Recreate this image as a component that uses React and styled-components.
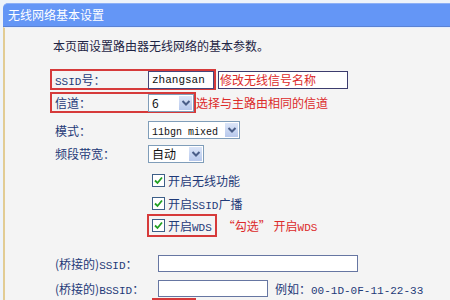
import styled, { createGlobalStyle } from "styled-components";

const GlobalStyle = createGlobalStyle`
  html, body {
    margin: 0;
    padding: 0;
    background: #eef3fa;
  }
  body {
    width: 450px;
    height: 300px;
    overflow: hidden;
    font-family: "Noto Sans CJK SC", sans-serif;
    font-size: 12px;
  }
`;

const Page = styled.div`
  width: 450px;
  height: 300px;
  padding-top: 3px;
  box-sizing: border-box;
  overflow: hidden;
`;

const Header = styled.div`
  margin-left: 3px;
  height: 24px;
  box-sizing: border-box;
  padding-left: 5px;
  background: #6496f6;
  border-top: 1px solid #8db0f6;
  border-bottom: 1px solid #5a82d4;
  border-top-left-radius: 5px;
  color: #fff;
  font-size: 12px;
  line-height: 22px;
`;

const Panel = styled.div`
  margin-left: 3px;
  height: 300px;
  border-left: 2px solid #e2cc94;
  border-top: 1px solid #e6eefc;
  background: #f4f4f4;
  padding-left: 45px;
`;

const Intro = styled.div`
  margin-top: 10px;
  padding-left: 3px;
  height: 16px;
  line-height: 16px;
  color: #1e2444;
`;

const Row = styled.div`
  display: flex;
  align-items: center;
  height: ${(p) => p.$h}px;
  margin-top: ${(p) => p.$top}px;
  padding-left: ${(p) => p.$indent || 0}px;
`;

const Field = styled.div`
  display: flex;
  align-items: center;
  height: 100%;
  box-sizing: border-box;
  border: 2px solid ${(p) => (p.$marked ? "#d63a3a" : "transparent")};
  padding-left: 3px;
  padding-right: ${(p) => p.$pr || 0}px;
  width: ${(p) => (p.$w ? `${p.$w}px` : "auto")};
`;

const Label = styled.div`
  width: ${(p) => p.$w || 93}px;
  flex-shrink: 0;
  color: #1f3a78;
  white-space: nowrap;
`;

const Latin = styled.span`
  font-family: "Liberation Mono", monospace;
  font-size: ${(p) => p.$size || 11}px;
`;

const TextBox = styled.input`
  width: ${(p) => p.$w}px;
  height: ${(p) => p.$h || 17}px;
  box-sizing: border-box;
  margin: 0;
  padding: 0 0 0 3px;
  border: 1px solid ${(p) => (p.$dark ? "#46467a" : "#6676a2")};
  background: #fff;
  color: #111;
  font-family: "Liberation Mono", monospace;
  font-size: 11px;
  outline: none;
`;

const Note = styled.span`
  color: #dc2a2a;
  margin-left: ${(p) => p.$ml || 0}px;
  white-space: nowrap;
`;

const NoteBox = styled.div`
  margin-left: 2px;
  width: 130px;
  height: 18px;
  box-sizing: border-box;
  border: 1px solid #3c3c6e;
  background: #fff;
  color: #dc2a2a;
  padding-left: 1px;
  line-height: 16px;
`;

const SelectBox = styled.div`
  display: flex;
  width: ${(p) => p.$w}px;
  height: 18px;
  box-sizing: border-box;
  border: 1px solid #7f9db9;
  background: #fff;
`;

const SelectText = styled.span`
  flex: 1;
  padding-left: 3px;
  line-height: 16px;
  color: #111;
  white-space: nowrap;
  overflow: hidden;
`;

const ArrowBtn = styled.span`
  width: 15px;
  flex-shrink: 0;
  display: flex;
  align-items: center;
  justify-content: center;
  box-sizing: border-box;
  border: 1px solid #fff;
  background: linear-gradient(#dbe5f8, #b7c8ec);
`;

const Check = styled.span`
  width: 13px;
  height: 13px;
  box-sizing: border-box;
  border: 1px solid #3d5f88;
  background: #fff;
  display: inline-flex;
  align-items: center;
  justify-content: center;
  flex-shrink: 0;
`;

const CheckText = styled.span`
  margin-left: 3px;
  color: #1f3a78;
  white-space: nowrap;
`;

const Hint = styled.span`
  margin-left: 7px;
  color: #1f3a78;
  white-space: nowrap;
`;

const Select = ({ w, children }) => (
  <SelectBox $w={w}>
    <SelectText>{children}</SelectText>
    <ArrowBtn>
      <svg width="10" height="8" viewBox="0 0 10 8">
        <path d="M1.5 2 L5 5.5 L8.5 2" fill="none" stroke="#4a5e88" strokeWidth="2" />
      </svg>
    </ArrowBtn>
  </SelectBox>
);

const CheckItem = ({ children }) => (
  <>
    <Check>
      <svg width="11" height="11" viewBox="0 0 11 11">
        <path d="M2 5.5 L4.5 8 L9 2.5" fill="none" stroke="#22a022" strokeWidth="1.8" />
      </svg>
    </Check>
    <CheckText>{children}</CheckText>
  </>
);

export default function App() {
  return (
    <Page>
      <GlobalStyle />
      <Header>无线网络基本设置</Header>
      <Panel>
        <Intro>本页面设置路由器无线网络的基本参数。</Intro>

        <Row $h={21} $top={15}>
          <Field $marked>
            <Label><Latin>SSID</Latin>号：</Label>
            <TextBox $w={66} $h={18} $dark readOnly value="zhangsan" />
          </Field>
          <NoteBox>修改无线信号名称</NoteBox>
        </Row>

        <Row $h={21} $top={2}>
          <Field $marked>
            <Label>信道：</Label>
            <Select w={46}>6</Select>
          </Field>
          <Note>选择与主路由相同的信道</Note>
        </Row>

        <Row $h={20} $top={7}>
          <Field>
            <Label>模式：</Label>
            <Select w={92}><Latin $size={10}>11bgn mixed</Latin></Select>
          </Field>
        </Row>

        <Row $h={21} $top={3}>
          <Field>
            <Label>频段带宽：</Label>
            <Select w={56}>自动</Select>
          </Field>
        </Row>

        <Row $h={20} $top={6} $indent={97}>
          <Field>
            <CheckItem>开启无线功能</CheckItem>
          </Field>
        </Row>

        <Row $h={20} $top={3} $indent={97}>
          <Field>
            <CheckItem>开启<Latin>SSID</Latin>广播</CheckItem>
          </Field>
        </Row>

        <Row $h={23} $top={1} $indent={97}>
          <Field $marked $pr={3}>
            <CheckItem>开启<Latin>WDS</Latin></CheckItem>
          </Field>
          <Note $ml={6}>“勾选” 开启<Latin>WDS</Latin></Note>
        </Row>

        <Row $h={20} $top={16}>
          <Field>
            <Label $w={103}>(桥接的)<Latin>SSID</Latin>：</Label>
            <TextBox $w={200} readOnly value="" />
          </Field>
        </Row>

        <Row $h={20} $top={5}>
          <Field>
            <Label $w={103}>(桥接的)<Latin>BSSID</Latin>：</Label>
            <TextBox $w={110} readOnly value="" />
            <Hint>例如：<Latin>00-1D-0F-11-22-33</Latin></Hint>
          </Field>
        </Row>

        <Row $h={21} $top={0} $indent={102}>
          <Field $marked $w={44} />
        </Row>
      </Panel>
    </Page>
  );
}
